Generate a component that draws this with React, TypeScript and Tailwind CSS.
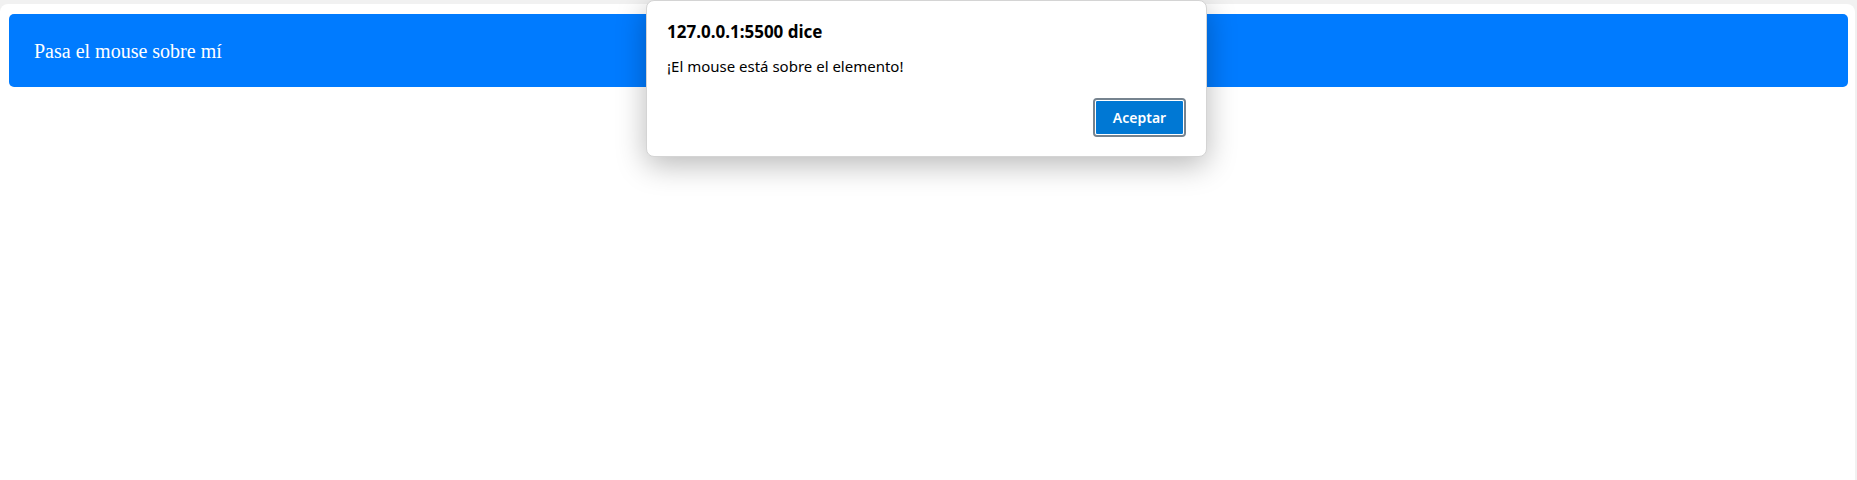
import React from "react";

export default function App() {
  return (
    <div className="relative w-[1857px] h-[480px] overflow-hidden bg-[#f1f1f1] pt-[4px] pr-[2px]">
      <div className="h-full bg-white rounded-t-[8px] pt-[10px] pl-[9px] pr-[7px]">
        <div className="h-[73px] rounded-[5px] bg-[#007bff] flex items-center pl-[25px]">
          <span className="text-white text-[20px] leading-none" style={{ fontFamily: '"Liberation Serif", "Times New Roman", serif' }}>
            Pasa el mouse sobre mí
          </span>
        </div>
      </div>

      <div
        className="absolute left-[646px] top-0 w-[561px] h-[157px] bg-white rounded-[8px] border border-[#d4d4d4] shadow-[0_8px_30px_rgba(0,0,0,0.28)] flex flex-col pl-[20px] pr-[20px]"
        style={{ fontFamily: '"Noto Sans", "Open Sans", sans-serif' }}
      >
        <div className="mt-[20px] text-[17px] leading-[22px] font-bold text-black">127.0.0.1:5500 dice</div>
        <div className="mt-[13px] text-[15px] leading-[20px] text-black">¡El mouse está sobre el elemento!</div>
        <div className="flex-1" />
        <div className="flex justify-end mb-[19px]">
          <button className="w-[93px] h-[39px] rounded-[4px] border-2 border-[#76838f] p-0">
            <span className="flex w-full h-full items-center justify-center rounded-[2px] border border-white bg-[#0078d4] text-white text-[14px] font-semibold">
              Aceptar
            </span>
          </button>
        </div>
      </div>
    </div>
  );
}
